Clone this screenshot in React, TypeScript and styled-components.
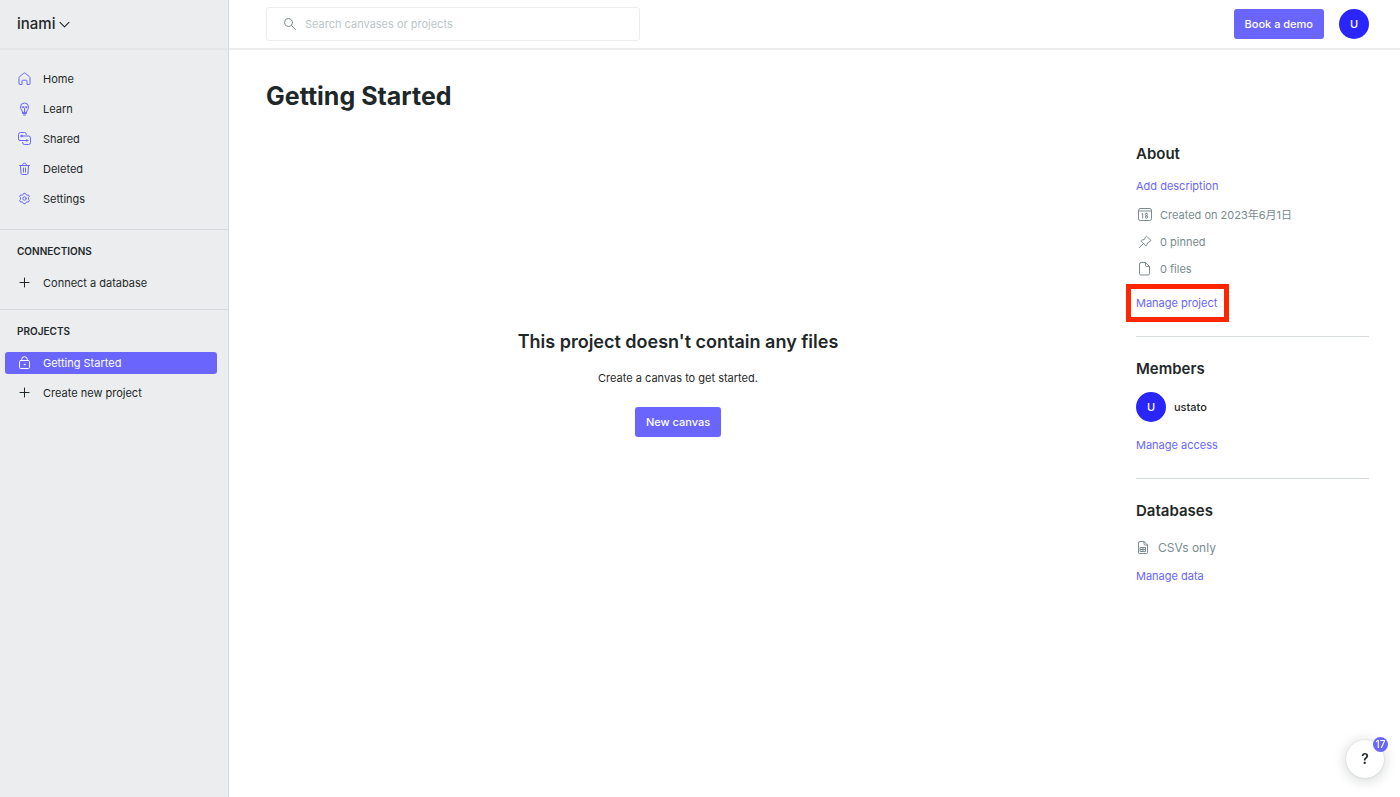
import React from "react";
import styled, { createGlobalStyle, css } from "styled-components";

const color = {
  accent: "#6965fd",
  avatar: "#2a26fb",
  text: "#1f2829",
  muted: "#7b8c8f",
  line: "#d5dbdd",
  faint: "#ededee",
  panel: "#ebedef",
};

const GlobalStyle = createGlobalStyle`
  *, *::before, *::after { box-sizing: border-box; }
  body {
    margin: 0;
    background: #fff;
    color: ${color.text};
    font-family: Inter, "Noto Sans CJK JP", sans-serif;
    font-size: 11px;
    line-height: 20px;
  }
  h1, h2, h3, p, ul { margin: 0; padding: 0; }
  ul { list-style: none; }
  button, input { font: inherit; }
  a { text-decoration: none; }
`;

const Page = styled.div`
  display: grid;
  grid-template-columns: 229px 1fr;
  min-height: 100vh;
`;

const Sidebar = styled.aside`
  background: ${color.panel};
  border-right: 1px solid ${color.line};
`;

const Workspace = styled.button`
  display: flex;
  align-items: center;
  gap: 4px;
  width: 100%;
  height: 50px;
  padding: 0 17px;
  border: 0;
  border-bottom: 2px solid #e4e7e8;
  background: none;
  color: ${color.text};
  font-size: 15px;
  font-weight: 500;
`;

const NavSection = styled.nav<{ $last?: boolean }>`
  padding: 13px 11px 15px 5px;
  border-bottom: ${(p) => (p.$last ? "0" : `1px solid ${color.line}`)};
  &:first-of-type { padding-top: 18px; padding-bottom: 19px; }
`;

const NavTitle = styled.h2`
  margin-bottom: 13px;
  padding-left: 12px;
  font-size: 10px;
  font-weight: 600;
  line-height: 16px;
`;

const NavList = styled.ul`
  display: flex;
  flex-direction: column;
  gap: 8px;
`;

const NavLink = styled.a<{ $active?: boolean; $plain?: boolean }>`
  display: flex;
  align-items: center;
  gap: 10px;
  height: 22px;
  padding-left: 12px;
  border-radius: 3px;
  color: ${color.text};
  svg { color: ${(p) => (p.$plain ? color.text : color.accent)}; }
  ${(p) =>
    p.$active &&
    css`
      background: ${color.accent};
      color: #fff;
      svg { color: #fff; }
    `}
`;

const Glyph = styled.svg`
  flex: none;
  fill: none;
  stroke: currentColor;
  stroke-width: 1;
  stroke-linecap: round;
  stroke-linejoin: round;
`;

const Content = styled.div`
  min-width: 0;
`;

const TopBar = styled.header`
  display: flex;
  align-items: center;
  gap: 15px;
  height: 50px;
  padding: 0 31px 0 37px;
  border-bottom: 2px solid ${color.faint};
`;

const SearchBox = styled.label`
  display: flex;
  align-items: center;
  gap: 7px;
  width: 374px;
  height: 34px;
  margin-right: auto;
  padding: 0 15px;
  border: 1px solid ${color.faint};
  border-radius: 3px;
  color: ${color.muted};
`;

const SearchInput = styled.input`
  flex: 1;
  min-width: 0;
  padding: 0;
  border: 0;
  outline: 0;
  background: none;
  color: ${color.text};
  &::placeholder { color: #bcc6c8; opacity: 1; }
`;

const PrimaryButton = styled.button`
  height: 30px;
  padding: 0 11px;
  border: 0;
  border-radius: 3px;
  background: ${color.accent};
  color: #fff;
  font-weight: 500;
  white-space: nowrap;
`;

const Avatar = styled.span`
  display: grid;
  place-items: center;
  flex: none;
  width: 30px;
  height: 30px;
  border-radius: 50%;
  background: ${color.avatar};
  color: #fff;
  font-weight: 500;
`;

const AvatarButton = styled.button`
  padding: 0;
  border: 0;
  background: none;
`;

const Main = styled.main`
  padding: 30px 31px 30px 37px;
`;

const Title = styled.h1`
  font-size: 25px;
  font-weight: 700;
  line-height: 32px;
`;

const Columns = styled.div`
  display: grid;
  grid-template-columns: minmax(0, 1fr) 233px;
  gap: 46px;
  padding-top: 30px;
`;

const Empty = styled.section`
  display: flex;
  flex-direction: column;
  align-items: center;
  padding-top: 188px;
`;

const EmptyTitle = styled.h2`
  font-size: 18px;
  font-weight: 600;
  line-height: 24px;
`;

const EmptyText = styled.p`
  margin: 14px 0 19px;
`;

const Panel = styled.section`
  & + & {
    margin-top: 23px;
    padding-top: 20px;
    border-top: 1px solid ${color.line};
  }
`;

const PanelTitle = styled.h3`
  margin-bottom: 10px;
  font-size: 15px;
  font-weight: 600;
  line-height: 24px;
`;

const PanelLink = styled.a`
  display: block;
  width: fit-content;
  color: ${color.accent};
`;

const Facts = styled.ul`
  display: flex;
  flex-direction: column;
  gap: 7px;
  margin: 9px 0 14px;
  color: ${color.muted};
`;

const Fact = styled.li`
  display: flex;
  align-items: center;
  gap: 7px;
  padding-left: 1px;
`;

const Source = styled.p`
  display: flex;
  align-items: center;
  gap: 6px;
  margin: 15px 0 8px;
  color: ${color.muted};
  font-size: 12px;
`;

const Highlighted = styled.div`
  position: relative;
  width: fit-content;
  &::after {
    content: "";
    position: absolute;
    inset: -9px -12px -9px -10px;
    border: 5px solid #ff2600;
    pointer-events: none;
  }
`;

const Member = styled.div`
  display: flex;
  align-items: center;
  gap: 8px;
  margin: 11px 0 13px;
  font-weight: 500;
`;

const HelpButton = styled.button`
  position: fixed;
  right: 16px;
  bottom: 19px;
  width: 38px;
  height: 38px;
  padding: 0;
  border: 0;
  border-radius: 50%;
  background: #fff;
  box-shadow: 0 2px 14px rgba(0, 20, 20, 0.2), 0 0 2px rgba(0, 20, 20, 0.15);
  color: ${color.text};
  font-size: 14px;
  font-weight: 600;
`;

const HelpBadge = styled.span`
  position: absolute;
  top: -3px;
  right: -4px;
  width: 15px;
  height: 15px;
  border-radius: 50%;
  background: ${color.accent};
  color: #fff;
  font-size: 10px;
  font-weight: 500;
  line-height: 15px;
`;

type IconProps = { children: React.ReactNode; size?: number };
const Icon = ({ children, size = 16 }: IconProps) => (
  <Glyph width={size} height={size} viewBox="0 0 16 16" aria-hidden="true">
    {children}
  </Glyph>
);

const HomeIcon = () => (
  <Icon>
    <path d="M2 6.800a1.500 1.500 0 0 1 .5-1.100L6.700 2.300a1.200 1.200 0 0 1 1.600 0l4.200 3.400a1.500 1.500 0 0 1 .5 1.100v5.700a1 1 0 0 1-1 1h-2v-3.300a1 1 0 0 0-1-1H6a1 1 0 0 0-1 1v3.300H3a1 1 0 0 1-1-1z" />
  </Icon>
);
const LearnIcon = () => (
  <Icon>
    <path d="M5.500 11c0-1.500-2-2.400-2-5a4 4 0 0 1 8 0c0 2.600-2 3.500-2 5zM5.500 11v1.500h4V11M6.500 14h2M7.500 11V7.500" />
    <circle cx="6" cy="6.200" r=".7" />
    <circle cx="9" cy="6.200" r=".7" />
  </Icon>
);
const SharedIcon = () => (
  <Icon>
    <path d="M5 9.500H3A1.500 1.500 0 0 1 1.500 8V3.500a2 2 0 0 1 2-2H7.500a2 2 0 0 1 1.900 2M5 5h6.500a2 2 0 0 1 2 2v4.500a2 2 0 0 1-2 2h-4a2 2 0 0 1-2-2M5 9.500h4.500" />
    <circle cx="4.500" cy="5" r=".8" fill="currentColor" />
    <circle cx="10" cy="9.500" r=".8" fill="currentColor" />
  </Icon>
);
const TrashIcon = () => (
  <Icon>
    <path d="M2.500 4.500h10M5.500 4.500c0-1.400.7-2.300 2-2.300s2 .9 2 2.300M3.500 4.500l.5 7.600a1.500 1.500 0 0 0 1.500 1.400h4a1.500 1.500 0 0 0 1.500-1.400l.5-7.600M6.500 7v4M8.500 7v4" />
  </Icon>
);
const GearIcon = () => (
  <Icon>
    <path d="m6.100 3.500.6-1.200h1.600l.6 1.200 1.100.6 1.500-.1.800 1.400-.8 1.200v1.800l.8 1.200-.8 1.400-1.500-.1-1.100.6-.6 1.200H6.700l-.6-1.200-1.100-.6-1.500.1-.8-1.400.8-1.200V6.600l-.8-1.200L3.500 4l1.500.1z" />
    <circle cx="7.500" cy="7.500" r="1.700" />
  </Icon>
);
const PlusIcon = () => (
  <Icon>
    <path d="M3 7.500h9M7.500 3v9" />
  </Icon>
);
const LockIcon = () => (
  <Icon>
    <rect x="2.500" y="5.500" width="10" height="8" rx="1.200" />
    <path d="M4.700 5.500V4.500a2.800 2.800 0 0 1 5.600 0v1" />
    <circle cx="7.500" cy="9.500" r=".4" />
  </Icon>
);
const ChevronIcon = () => (
  <Icon size={11}>
    <path d="m1.500 5 6.500 6.500L14.500 5" strokeWidth="1.600" />
  </Icon>
);
const SearchIcon = () => (
  <Icon>
    <circle cx="6.500" cy="6.500" r="4" />
    <path d="m9.500 9.500 4 4" />
  </Icon>
);
const CalendarIcon = () => (
  <Icon>
    <rect x="1.500" y="1.500" width="13" height="12" rx="1.800" />
    <path d="M1.500 4h13M4.800 6.900l.9-.5v4.800M9.500 6.300a1.100 1.100 0 1 1 0 2.300 1.100 1.100 0 1 1 0-2.300zM9.500 8.700a1.200 1.200 0 1 1 0 2.500 1.200 1.200 0 1 1 0-2.500z" />
  </Icon>
);
const PinIcon = () => (
  <Icon>
    <path d="M8.600 2.900c.3-.7 1-.8 1.500-.3l3.300 3.300c.5.500.4 1.200-.3 1.500l-2.500 1.400-.9 2.600c-.2.600-.7.700-1.100.3L4.300 7.400c-.4-.4-.3-.9.3-1.100l2.600-.9zM6.300 9.700 2.500 13.500" />
  </Icon>
);
const FileIcon = () => (
  <Icon>
    <path d="M4 1.500h4.500L12.500 5.500v7a1.500 1.500 0 0 1-1.500 1.500H4a1.500 1.500 0 0 1-1.500-1.500V3A1.500 1.500 0 0 1 4 1.500zM8.500 1.500v3a1 1 0 0 0 1 1h3" />
  </Icon>
);
const SheetIcon = () => (
  <Icon>
    <path d="M4 1.500h4l3.500 3.500v7.500a1 1 0 0 1-1 1H3.500a1 1 0 0 1-1-1V3A1.500 1.500 0 0 1 4 1.500zM8 1.500v2.500a1 1 0 0 0 1 1h2.500" />
    <path d="M4.500 7.500h5v4h-5zM4.500 9.500h5M7 7.500v4" />
  </Icon>
);

const mainLinks = [
  { label: "Home", icon: <HomeIcon /> },
  { label: "Learn", icon: <LearnIcon /> },
  { label: "Shared", icon: <SharedIcon /> },
  { label: "Deleted", icon: <TrashIcon /> },
  { label: "Settings", icon: <GearIcon /> },
];

export default function App() {
  return (
    <>
      <GlobalStyle />
      <Page>
        <Sidebar>
          <Workspace type="button">
            inami
            <ChevronIcon />
          </Workspace>
          <NavSection aria-label="Main">
            <NavList>
              {mainLinks.map((item) => (
                <li key={item.label}>
                  <NavLink href="#">
                    {item.icon}
                    {item.label}
                  </NavLink>
                </li>
              ))}
            </NavList>
          </NavSection>
          <NavSection aria-label="Connections">
            <NavTitle>CONNECTIONS</NavTitle>
            <NavList>
              <li>
                <NavLink href="#" $plain>
                  <PlusIcon />
                  Connect a database
                </NavLink>
              </li>
            </NavList>
          </NavSection>
          <NavSection aria-label="Projects" $last>
            <NavTitle>PROJECTS</NavTitle>
            <NavList>
              <li>
                <NavLink href="#" $active aria-current="page">
                  <LockIcon />
                  Getting Started
                </NavLink>
              </li>
              <li>
                <NavLink href="#" $plain>
                  <PlusIcon />
                  Create new project
                </NavLink>
              </li>
            </NavList>
          </NavSection>
        </Sidebar>

        <Content>
          <TopBar>
            <SearchBox>
              <SearchIcon />
              <SearchInput
                type="text"
                aria-label="Search"
                placeholder="Search canvases or projects"
              />
            </SearchBox>
            <PrimaryButton type="button">Book a demo</PrimaryButton>
            <AvatarButton type="button" aria-label="Account">
              <Avatar>U</Avatar>
            </AvatarButton>
          </TopBar>

          <Main>
            <Title>Getting Started</Title>
            <Columns>
              <Empty>
                <EmptyTitle>This project doesn't contain any files</EmptyTitle>
                <EmptyText>Create a canvas to get started.</EmptyText>
                <PrimaryButton type="button">New canvas</PrimaryButton>
              </Empty>

              <div>
                <Panel>
                  <PanelTitle>About</PanelTitle>
                  <PanelLink href="#">Add description</PanelLink>
                  <Facts>
                    <Fact>
                      <CalendarIcon />
                      Created on 2023年6月1日
                    </Fact>
                    <Fact>
                      <PinIcon />0 pinned
                    </Fact>
                    <Fact>
                      <FileIcon />0 files
                    </Fact>
                  </Facts>
                  <Highlighted>
                    <PanelLink href="#">Manage project</PanelLink>
                  </Highlighted>
                </Panel>
                <Panel>
                  <PanelTitle>Members</PanelTitle>
                  <Member>
                    <Avatar>U</Avatar>
                    ustato
                  </Member>
                  <PanelLink href="#">Manage access</PanelLink>
                </Panel>
                <Panel>
                  <PanelTitle>Databases</PanelTitle>
                  <Source>
                    <SheetIcon />
                    CSVs only
                  </Source>
                  <PanelLink href="#">Manage data</PanelLink>
                </Panel>
              </div>
            </Columns>
          </Main>
        </Content>
      </Page>
      <HelpButton type="button" aria-label="Help, 17 new items">
        ?<HelpBadge>17</HelpBadge>
      </HelpButton>
    </>
  );
}
